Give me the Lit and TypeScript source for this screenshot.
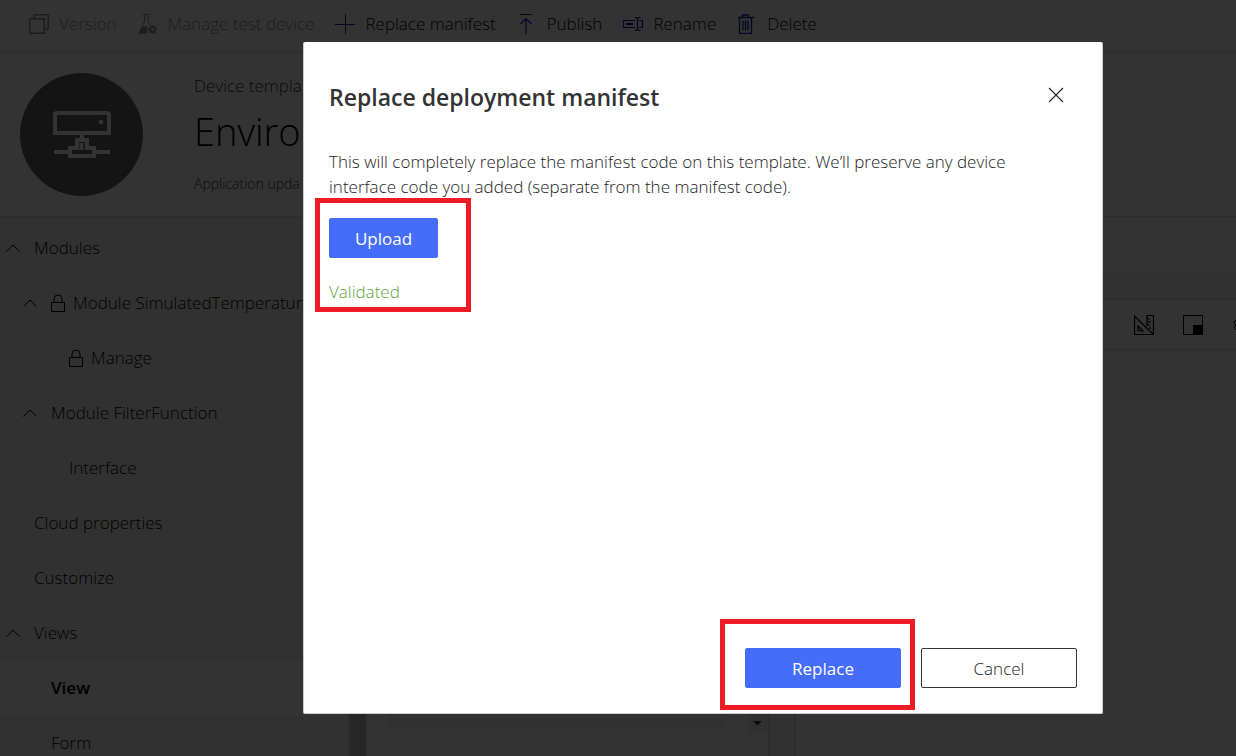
import { LitElement, html, css, svg, nothing, TemplateResult } from "lit";
import { customElement, property } from "lit/decorators.js";
import { classMap } from "lit/directives/class-map.js";

const icons: Record<string, { box: string; body: TemplateResult }> = {
  version: { box: "0 0 20 20", body: svg`<path d="M.75 4.75h14.5v14.5H.75zM5 4.500V.75h14.250V15h-4" stroke-width="1.500"/>` },
  flask: {
    box: "0 0 20 20",
    body: svg`<path d="M4.500.5h7M6.500.5v7L1.500 18.500h7M10 .5v7l2 3.500"/><path d="M4 12.500h5.500l-.5 7H.5z" fill="currentColor" stroke="none"/><circle cx="14.500" cy="15.500" r="2.500" stroke-width="1.800"/><path d="M14.500 11v1.600M14.500 18.400V20M10 15.500h1.600M17.400 15.500H19M11.300 12.300l1.200 1.200M16.500 17.500l1.200 1.200M17.700 12.300l-1.200 1.200M12.500 17.500l-1.200 1.200" stroke-width="1.500"/>`,
  },
  plus: { box: "0 0 20 20", body: svg`<path d="M10.500 0v20M0 10.500h20"/>` },
  publish: { box: "0 0 20 20", body: svg`<path d="M3 .5h12M9 20V4.500M3.500 10L9 4.500 14.500 10" stroke-width="1.200"/>` },
  rename: { box: "0 0 20 20", body: svg`<path d="M12 6.500H.5v7H12M16 6.500h3.500v7H16M14.500 4v12M11.500 3.500h1.500l1.500 1 1.500-1h1.500M11.500 16.500h1.500l1.500-1 1.500 1h1.500" stroke-width="1.200"/><path d="M3 10h7" stroke-width="2"/>` },
  trash: { box: "0 0 20 20", body: svg`<path d="M1 3.500h16M5.500 3V1h6v2M2.500 4v14.500q0 1 1 1h10q1 0 1-1V4M6 6.500v10M8.500 6.500v10M11 6.500v10" stroke-width="1.300"/>` },
  chevron: { box: "0 0 14 8", body: svg`<path d="M.5 7.500L7 1l6.500 6.500"/>` },
  lock: { box: "0 0 14 18", body: svg`<path d="M.5 8.500h13v9H.5zM3 8.500V5a4 4 0 0 1 8 0v3.500"/>` },
  close: { box: "0 0 16 16", body: svg`<path d="M1 1l14 14M15 1L1 15" stroke-width="1.100"/>` },
  ruler: { box: "0 0 20 20", body: svg`<path d="M.5 1v18.500h19zM4 11v5h5zM13 11V.5h6.500v19M13 4h3M13 7h4M13 10h3M15 13h2" stroke-width="1.200"/>` },
  tile: { box: "0 0 20 20", body: svg`<path d="M.5.5h19v19H.5z"/><path d="M10 10h9v9h-9z" fill="currentColor" stroke="none"/>` },
  gear: { box: "0 0 20 20", body: svg`<circle cx="10" cy="10" r="3"/><path d="M8 5V3h4v2l2 1 2-1 2 3-2 2 2 2-2 3-2-1-2 1v2H8v-2l-2-1-2 1-2-3 2-2-2-2 2-3 2 1z"/>` },
  template: {
    box: "0 0 58 48",
    body: svg`<path d="M2 22V4q0-2 2-2h50q2 0 2 2v18zM1 41h15M42 41h15M29 23v6M17 45V37h7v-8h10v8h7v8zM28.500 32v7" stroke-width="4"/><circle cx="48" cy="11" r="2.300" fill="currentColor" stroke="none"/>`,
  },
};

@customElement("line-icon")
export class LineIcon extends LitElement {
  @property() name = "";
  static styles = css`
    :host { display: inline-flex; flex: none; }
    .glyph { width: 100%; height: 100%; display: block; fill: none; stroke: currentColor; }
  `;
  render() {
    const icon = icons[this.name];
    return html`<svg class="glyph" viewBox=${icon.box} aria-hidden="true">${icon.body}</svg>`;
  }
}

interface Command { icon: string; label: string; disabled?: boolean; }
const commands: Command[] = [
  { icon: "version", label: "Version", disabled: true },
  { icon: "flask", label: "Manage test device", disabled: true },
  { icon: "plus", label: "Replace manifest" },
  { icon: "publish", label: "Publish" },
  { icon: "rename", label: "Rename" },
  { icon: "trash", label: "Delete" },
];

interface NavItem { label: string; level: number; open?: boolean; locked?: boolean; selected?: boolean; }
const navItems: NavItem[] = [
  { label: "Modules", level: 0, open: true },
  { label: "Module SimulatedTemperatur", level: 1, open: true, locked: true },
  { label: "Manage", level: 2, locked: true },
  { label: "Module FilterFunction", level: 1, open: true },
  { label: "Interface", level: 2 },
  { label: "Cloud properties", level: 0 },
  { label: "Customize", level: 0 },
  { label: "Views", level: 0, open: true },
  { label: "View", level: 1, selected: true },
  { label: "Form", level: 1 },
];

@customElement("app-root")
export class AppRoot extends LitElement {
  static styles = css`
    :host {
      display: block;
      position: relative;
      height: 100vh;
      overflow: hidden;
      font-family: "Open Sans", "Noto Sans", sans-serif;
      font-size: 17px;
      font-weight: 300;
      line-height: 25px;
      color: #222;
      background: #fff;
    }
    * { box-sizing: border-box; }
    button { font: inherit; color: inherit; background: none; border: 0; padding: 0; }
    .page { height: 100%; display: flex; flex-direction: column; color: #000; }

    .commands {
      flex: none;
      display: flex;
      align-items: center;
      gap: 21px;
      height: 52px;
      padding: 0 29px 4px;
      border-bottom: 1px solid #ddd;
    }
    .command { display: flex; align-items: center; gap: 10px; white-space: nowrap; }
    .command line-icon { width: 20px; height: 20px; color: #1818b4; }
    .command:disabled, .command:disabled line-icon { color: #909090; }

    .header {
      flex: none;
      display: flex;
      gap: 51px;
      height: 165px;
      padding: 21px 20px;
      border-bottom: 1px solid #ddd;
    }
    .avatar {
      flex: none;
      display: grid;
      place-items: center;
      width: 123px;
      height: 123px;
      border-radius: 50%;
      color: #fff;
      background: #666;
    }
    .avatar line-icon { width: 58px; height: 48px; }
    .titles { color: #333; white-space: nowrap; }
    .kind { margin: 0; }
    .name { margin: 7px 0 17px; font-size: 38px; line-height: 52px; font-weight: 300; color: #000; }
    .updated { margin: 0; font-size: 14px; line-height: 20px; }

    .body { flex: 1; min-height: 0; display: flex; }
    .nav {
      flex: none;
      width: 349px;
      padding-top: 3px;
      overflow: hidden;
      background: #f5f5f5;
    }
    .row {
      display: flex;
      align-items: center;
      height: 55px;
      padding-left: 6px;
      color: #000;
      text-decoration: none;
      white-space: nowrap;
    }
    .level-1 { padding-left: 23px; }
    .level-2 { padding-left: 41px; }
    .selected { background: #fff; font-weight: 600; color: #000; }
    .toggle { flex: none; width: 28px; display: flex; }
    .toggle line-icon { width: 14px; height: 8px; }
    .lock { width: 14px; height: 18px; margin-right: 8px; }
    .scrollbar { flex: none; width: 17px; background: #c1c1c1; }

    .designer { flex: 1; min-width: 0; display: flex; flex-direction: column; background: #f5f5f5; }
    .tabs { flex: none; height: 57px; background: #fff; border-bottom: 1px solid #ddd; }
    .tools {
      flex: none;
      display: flex;
      justify-content: flex-end;
      align-items: center;
      gap: 29px;
      height: 51px;
      margin-top: 25px;
      margin-right: -16px;
      border: 1px solid #ddd;
      border-width: 1px 0;
      background: #fff;
    }
    .tool { display: flex; }
    .tool line-icon { width: 20px; height: 20px; }
    .columns { flex: 1; min-height: 0; display: flex; gap: 25px; padding-left: 2px; }
    .tiles {
      flex: none;
      display: flex;
      align-items: flex-end;
      justify-content: space-between;
      width: 401px;
      padding-left: 20px;
      padding-bottom: 22px;
      background: #fff;
      border-right: 1px solid #ddd;
    }
    .field { width: 338px; height: 40px; background: #f5f5f5; border-bottom: 6px solid #fff; }
    .scroll-down { display: grid; place-items: center; width: 21px; height: 34px; padding-top: 12px; background: #f0f0f0; }
    .arrow { width: 10px; height: 5px; background: #333; clip-path: polygon(0 0, 100% 0, 50% 100%); }
    .canvas { flex: 1; background: #fff; border-left: 2px solid #ddd; }

    .overlay {
      position: absolute;
      inset: 0;
      display: grid;
      padding: 42px 133px 42px 303px;
      background: rgba(0, 0, 0, 0.8);
    }
    .dialog {
      display: flex;
      flex-direction: column;
      padding: 37px 25px 25px;
      border: 1px solid #ccc;
      border-width: 0 1px 1px;
      border-radius: 2px;
      background: #fff;
    }
    .dialog-head { display: flex; align-items: flex-start; justify-content: space-between; padding-right: 13px; }
    .dialog-title { margin: 0; font-size: 23px; line-height: 36px; font-weight: 600; color: #333; }
    .close { display: flex; margin-top: 8px; }
    .close line-icon { width: 16px; height: 16px; }
    .message { margin: 34px 22px 19px 0; }
    .marked { position: relative; align-self: flex-start; }
    .marked::after { content: ""; position: absolute; border: 5px solid #ed1c24; pointer-events: none; }
    .upload-mark::after { inset: -20px -33px -8px -14px; }
    .replace-mark::after { inset: -29px -14px -22px -25px; }
    .button { display: block; height: 40px; border: 1px solid #333; border-radius: 2px; }
    .primary { color: #fff; background: #466cfa; border-color: #466cfa; font-weight: 400; }
    .upload { width: 109px; }
    .wide { width: 156px; }
    .status { display: block; margin-top: 21px; color: #5ca43a; }
    .actions { display: flex; justify-content: flex-end; gap: 20px; margin-top: auto; }
  `;

  private renderRow(item: NavItem) {
    const classes = { row: true, [`level-${item.level}`]: true, selected: !!item.selected };
    return html`<a href="#" class=${classMap(classes)}>
      <span class="toggle">${item.open ? html`<line-icon name="chevron"></line-icon>` : nothing}</span>
      ${item.locked ? html`<line-icon class="lock" name="lock"></line-icon>` : nothing}
      <span>${item.label}</span>
    </a>`;
  }

  render() {
    return html`
      <div class="page">
        <div class="commands" role="toolbar">
          ${commands.map((c) => html`<button class="command" ?disabled=${c.disabled}>
            <line-icon name=${c.icon}></line-icon><span>${c.label}</span>
          </button>`)}
        </div>
        <header class="header">
          <div class="avatar"><line-icon name="template"></line-icon></div>
          <div class="titles">
            <p class="kind">Device templa</p>
            <h1 class="name">Enviro</h1>
            <p class="updated">Application upda</p>
          </div>
        </header>
        <div class="body">
          <nav class="nav">${navItems.map((item) => this.renderRow(item))}</nav>
          <div class="scrollbar"></div>
          <main class="designer">
            <div class="tabs"></div>
            <div class="tools">
              ${["ruler", "tile", "gear"].map((name) => html`<button class="tool" aria-label=${name}><line-icon name=${name}></line-icon></button>`)}
            </div>
            <div class="columns">
              <div class="tiles">
                <div class="field"></div>
                <div class="scroll-down"><div class="arrow"></div></div>
              </div>
              <div class="canvas"></div>
            </div>
          </main>
        </div>
      </div>
      <div class="overlay">
        <section class="dialog" role="dialog" aria-labelledby="dialog-title">
          <div class="dialog-head">
            <h2 class="dialog-title" id="dialog-title">Replace deployment manifest</h2>
            <button class="close" aria-label="Close"><line-icon name="close"></line-icon></button>
          </div>
          <p class="message">This will completely replace the manifest code on this template. We’ll preserve any device interface code you added (separate from the manifest code).</p>
          <div class="marked upload-mark">
            <button class="button primary upload">Upload</button>
            <output class="status">Validated</output>
          </div>
          <div class="actions">
            <div class="marked replace-mark"><button class="button primary wide">Replace</button></div>
            <button class="button wide">Cancel</button>
          </div>
        </section>
      </div>
    `;
  }
}
